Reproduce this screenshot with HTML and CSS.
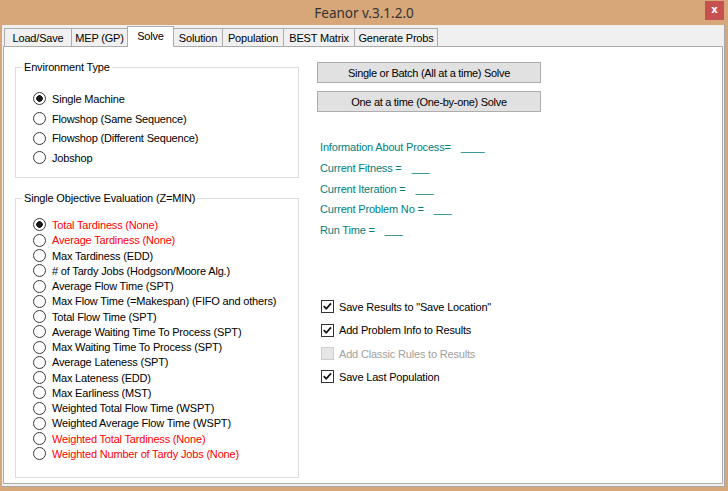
FILE: index.html
```html
<!DOCTYPE html>
<html>
<head>
<meta charset="utf-8">
<link rel="stylesheet" href="styles.css">
</head>
<body>
<div class="titlebar">
  <span></span>
  <span class="title">Feanor v.3.1.2.0</span>
  <span class="close-wrap"><span class="close">x</span></span>
</div>
<div class="window">
  <div class="tabs">
    <div class="tab t-load">Load/Save</div>
    <div class="tab t-mep">MEP (GP)</div>
    <div class="tab t-solve active">Solve</div>
    <div class="tab t-solution">Solution</div>
    <div class="tab t-pop">Population</div>
    <div class="tab t-best">BEST Matrix</div>
    <div class="tab t-gen">Generate Probs</div>
  </div>
  <div class="page">
    <div class="left">
      <fieldset class="group">
        <legend>Environment Type</legend>
        <div class="opts env">
          <div class="opt"><span class="radio on"></span>Single Machine</div>
          <div class="opt"><span class="radio"></span>Flowshop (Same Sequence)</div>
          <div class="opt"><span class="radio"></span>Flowshop (Different Sequence)</div>
          <div class="opt"><span class="radio"></span>Jobshop</div>
        </div>
      </fieldset>
      <fieldset class="group obj">
        <legend>Single Objective Evaluation (Z=MIN)</legend>
        <div class="opts objs">
          <div class="opt red"><span class="radio on"></span>Total Tardiness (None)</div>
          <div class="opt red"><span class="radio"></span>Average Tardiness (None)</div>
          <div class="opt"><span class="radio"></span>Max Tardiness (EDD)</div>
          <div class="opt"><span class="radio"></span># of Tardy Jobs (Hodgson/Moore Alg.)</div>
          <div class="opt"><span class="radio"></span>Average Flow Time (SPT)</div>
          <div class="opt"><span class="radio"></span>Max Flow Time (=Makespan) (FIFO and others)</div>
          <div class="opt"><span class="radio"></span>Total Flow Time (SPT)</div>
          <div class="opt"><span class="radio"></span>Average Waiting Time To Process (SPT)</div>
          <div class="opt"><span class="radio"></span>Max Waiting Time To Process (SPT)</div>
          <div class="opt"><span class="radio"></span>Average Lateness (SPT)</div>
          <div class="opt"><span class="radio"></span>Max Lateness (EDD)</div>
          <div class="opt"><span class="radio"></span>Max Earliness (MST)</div>
          <div class="opt"><span class="radio"></span>Weighted Total Flow Time (WSPT)</div>
          <div class="opt"><span class="radio"></span>Weighted Average Flow Time (WSPT)</div>
          <div class="opt red"><span class="radio"></span>Weighted Total Tardiness (None)</div>
          <div class="opt red"><span class="radio"></span>Weighted Number of Tardy Jobs (None)</div>
        </div>
      </fieldset>
    </div>
    <div class="right">
      <button class="btn">Single or Batch (All at a time) Solve</button>
      <button class="btn">One at a time (One-by-one) Solve</button>
      <div class="info">
        <div class="info-row"><span>Information About Process=</span><span class="blank">____</span></div>
        <div class="info-row"><span>Current Fitness =</span><span class="blank">___</span></div>
        <div class="info-row"><span>Current Iteration =</span><span class="blank">___</span></div>
        <div class="info-row"><span>Current Problem No =</span><span class="blank">___</span></div>
        <div class="info-row"><span>Run Time =</span><span class="blank">___</span></div>
      </div>
      <div class="checks">
        <div class="check"><span class="box"><svg width="11" height="11" viewBox="0 0 11 11"><path d="M1.8 5.2 L4.2 7.8 L9 2.4" fill="none" stroke="#111" stroke-width="1.7"/></svg></span>Save Results to "Save Location"</div>
        <div class="check"><span class="box"><svg width="11" height="11" viewBox="0 0 11 11"><path d="M1.8 5.2 L4.2 7.8 L9 2.4" fill="none" stroke="#111" stroke-width="1.7"/></svg></span>Add Problem Info to Results</div>
        <div class="check disabled"><span class="box"></span>Add Classic Rules to Results</div>
        <div class="check"><span class="box"><svg width="11" height="11" viewBox="0 0 11 11"><path d="M1.8 5.2 L4.2 7.8 L9 2.4" fill="none" stroke="#111" stroke-width="1.7"/></svg></span>Save Last Population</div>
      </div>
    </div>
  </div>
</div>
</body>
</html>
```
FILE: styles.css
```css
* { box-sizing: border-box; }

body {
  margin: 0;
  width: 728px;
  height: 491px;
  overflow: hidden;
  background: #D7A679;
  font-family: "Liberation Sans", Arial, sans-serif;
  font-size: 11px;
  letter-spacing: -0.18px;
  color: #000;
}

.titlebar {
  height: 25px;
  display: grid;
  grid-template-columns: 1fr auto 1fr;
  align-items: center;
}

.title {
  font-family: "Noto Sans", sans-serif;
  font-size: 13.5px;
  letter-spacing: 0;
  color: #333;
}

.close-wrap {
  justify-self: end;
  align-self: start;
  padding: 1px 4px 0 0;
}

.close {
  display: flex;
  width: 19px;
  height: 19px;
  align-items: center;
  justify-content: center;
  background: #C75050;
  color: #fff;
  font-family: "DejaVu Sans", sans-serif;
  font-weight: bold;
  font-size: 10px;
  line-height: 1;
  padding-bottom: 2px;
}

.window {
  margin-left: 2px;
  width: 723px;
  height: 462px;
  background: #F0F0F0;
  border-right: 1px solid #A8A8A8;
  border-bottom: 1px solid #A8A8A8;
  display: flex;
  flex-direction: column;
}

.tabs {
  display: flex;
  height: 21px;
  align-items: flex-end;
  padding-left: 2px;
}

.tab {
  height: 18px;
  padding: 0;
  border: 1px solid #ACACAC;
  border-bottom: 0;
  margin-right: -1px;
  display: flex;
  align-items: center;
  justify-content: center;
  background: #F0F0F0;
  white-space: nowrap;
}

.t-load { width: 68px; }
.t-mep { width: 57px; }
.t-solve { width: 47px; }
.t-solution { width: 50px; }
.t-pop { width: 62px; }
.t-best { width: 72px; }
.t-gen { width: 84px; }

.tab.active {
  position: relative;
  z-index: 2;
  height: 21px;
  margin-bottom: -1px;
  background: #fff;
  align-items: flex-start;
  padding-top: 3px;
}

.page {
  flex: 1;
  background: #fff;
  border: 1px solid #ACACAC;
  margin: 0 1px 2px 1px;
  display: grid;
  grid-template-columns: 295px 1fr;
  align-content: start;
}

.left {
  padding: 13.5px 0 0 11px;
}

fieldset.group {
  margin: 0;
  padding: 0;
  width: 284px;
  min-width: 0;
  border: 1px solid #DCDCDC;
}

fieldset.group legend {
  margin-left: 6px;
  padding: 0 2px;
  line-height: 13px;
}

fieldset.group.obj {
  margin-top: 14.5px;
}

.opts {
  padding-left: 17px;
}

.env {
  padding-top: 15.7px;
  padding-bottom: 9.4px;
}

.objs {
  padding-top: 11.9px;
  padding-bottom: 15.3px;
}

.opt {
  display: flex;
  align-items: center;
  gap: 6px;
  height: 19.6px;
  white-space: nowrap;
}

.objs .opt {
  height: 15.27px;
}

.opt.red {
  color: #FF0000;
}

.radio {
  flex: none;
  width: 13px;
  height: 13px;
  border-radius: 50%;
  border: 1px solid #3A3A3A;
  background: #fff;
}

.radio.on {
  background: radial-gradient(circle, #1A1A1A 0 3px, #fff 3.6px);
}

.right {
  padding: 15px 0 0 18px;
}

.btn {
  display: block;
  width: 224px;
  height: 21px;
  padding: 0;
  margin: 0;
  background: #E1E1E1;
  border: 1px solid #ADADAD;
  font: inherit;
  letter-spacing: -0.3px;
  color: #000;
  text-align: center;
}

.btn + .btn {
  margin-top: 8px;
}

.info {
  margin-top: 24.6px;
  padding-left: 3px;
  color: #008080;
}

.info-row {
  height: 20.8px;
  display: flex;
  align-items: center;
}

.blank {
  margin-left: 10px;
}

.checks {
  margin-top: 54.75px;
}

.check {
  height: 23.3px;
  display: flex;
  align-items: center;
  gap: 5px;
  padding-left: 4px;
}

.box {
  flex: none;
  width: 13px;
  height: 13px;
  border: 1px solid #333;
  background: #fff;
  display: flex;
  align-items: center;
  justify-content: center;
}

.check.disabled {
  color: #A0A0A0;
}

.check.disabled .box {
  border-color: #CCCCCC;
  background: #E6E6E6;
}
```
